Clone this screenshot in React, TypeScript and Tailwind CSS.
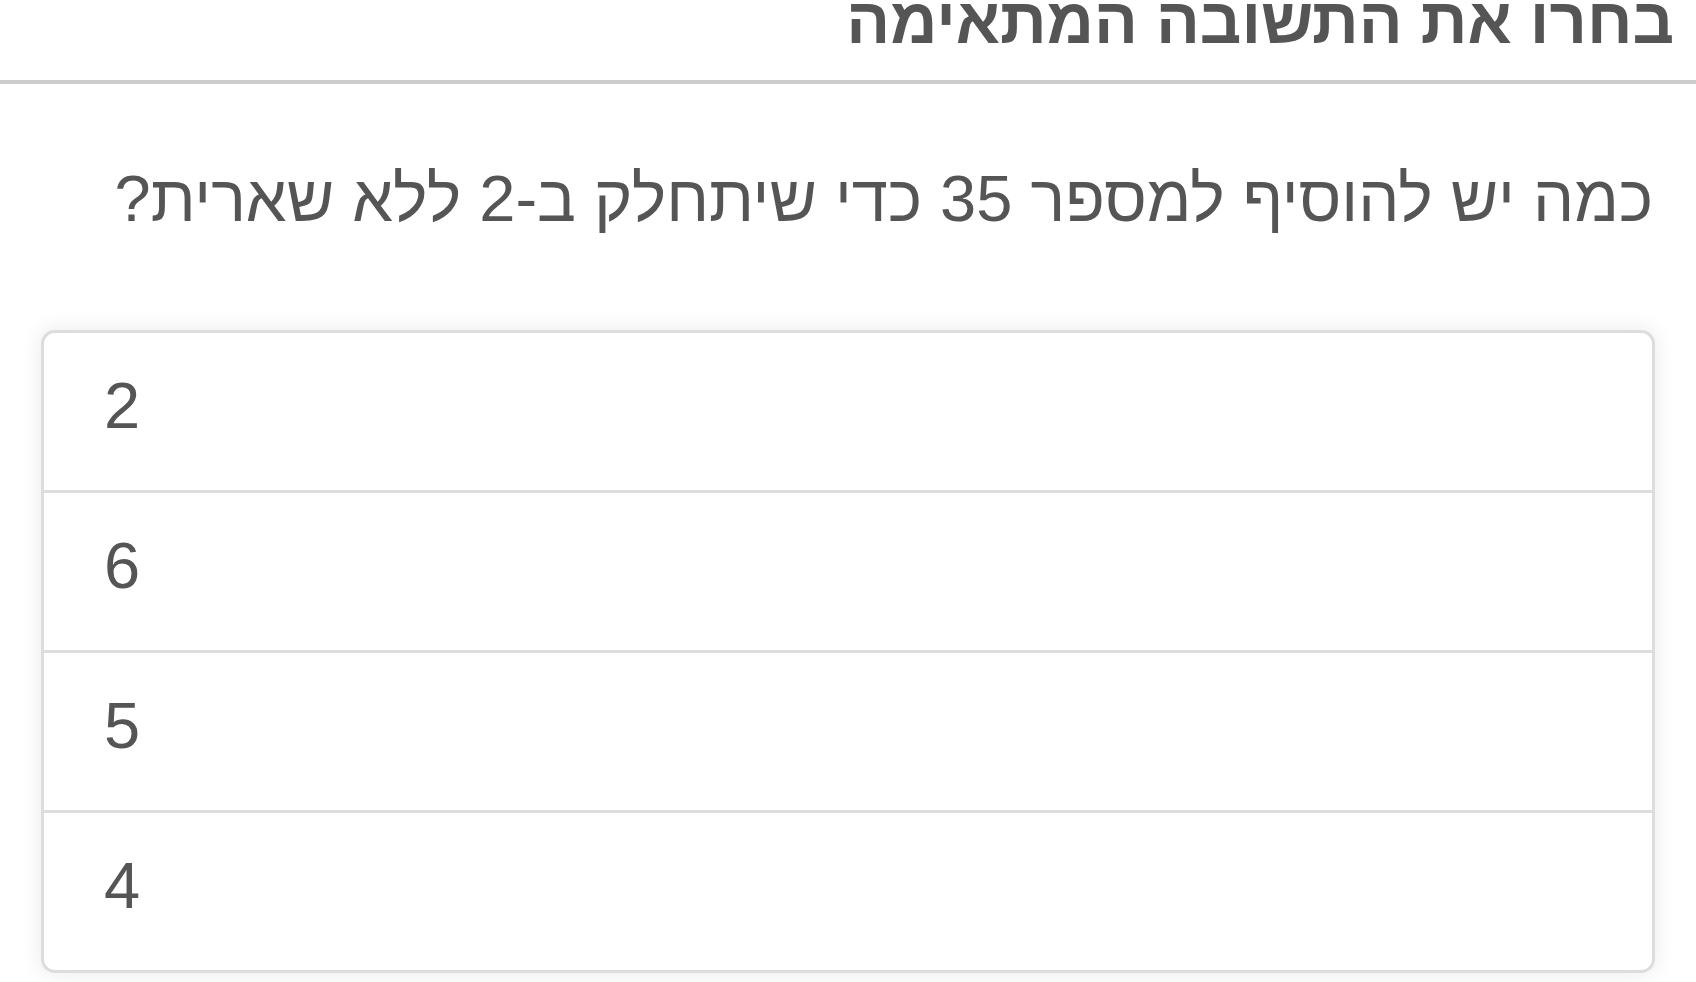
import React from "react";

const answers = ["2", "6", "5", "4"];

const QuizPage: React.FC = () => {
  return (
    <div
      dir="rtl"
      className="min-h-screen w-full bg-white text-[#555] font-['Liberation_Sans',Arial,sans-serif]"
    >
      <div className="h-[84px] overflow-hidden border-b-4 border-[#ccc] pr-[22px]">
        <h1 className="-mt-[12px] text-[65px] font-bold leading-none">
          בחרו את התשובה המתאימה
        </h1>
      </div>
      <p className="mt-[82px] pr-[43px] text-[65px] leading-none">
        כמה יש להוסיף למספר 35 כדי שיתחלק ב-2 ללא שארית?
      </p>
      <div className="mx-[41px] mt-[99px] rounded-[14px] border-[3px] border-[#ddd] bg-white shadow-[0_0_22px_rgba(0,0,0,0.09)] overflow-hidden">
        {answers.map((a, i) => (
          <button
            key={i}
            dir="ltr"
            className={
              "flex w-full items-center pl-[60px] pb-[12px] text-left text-[65px] leading-none" +
              (i > 0 ? " h-[160px] border-t-[3px] border-[#ddd]" : " h-[157px]")
            }
          >
            {a}
          </button>
        ))}
      </div>
    </div>
  );
};

export default function App() {
  return <QuizPage />;
}
